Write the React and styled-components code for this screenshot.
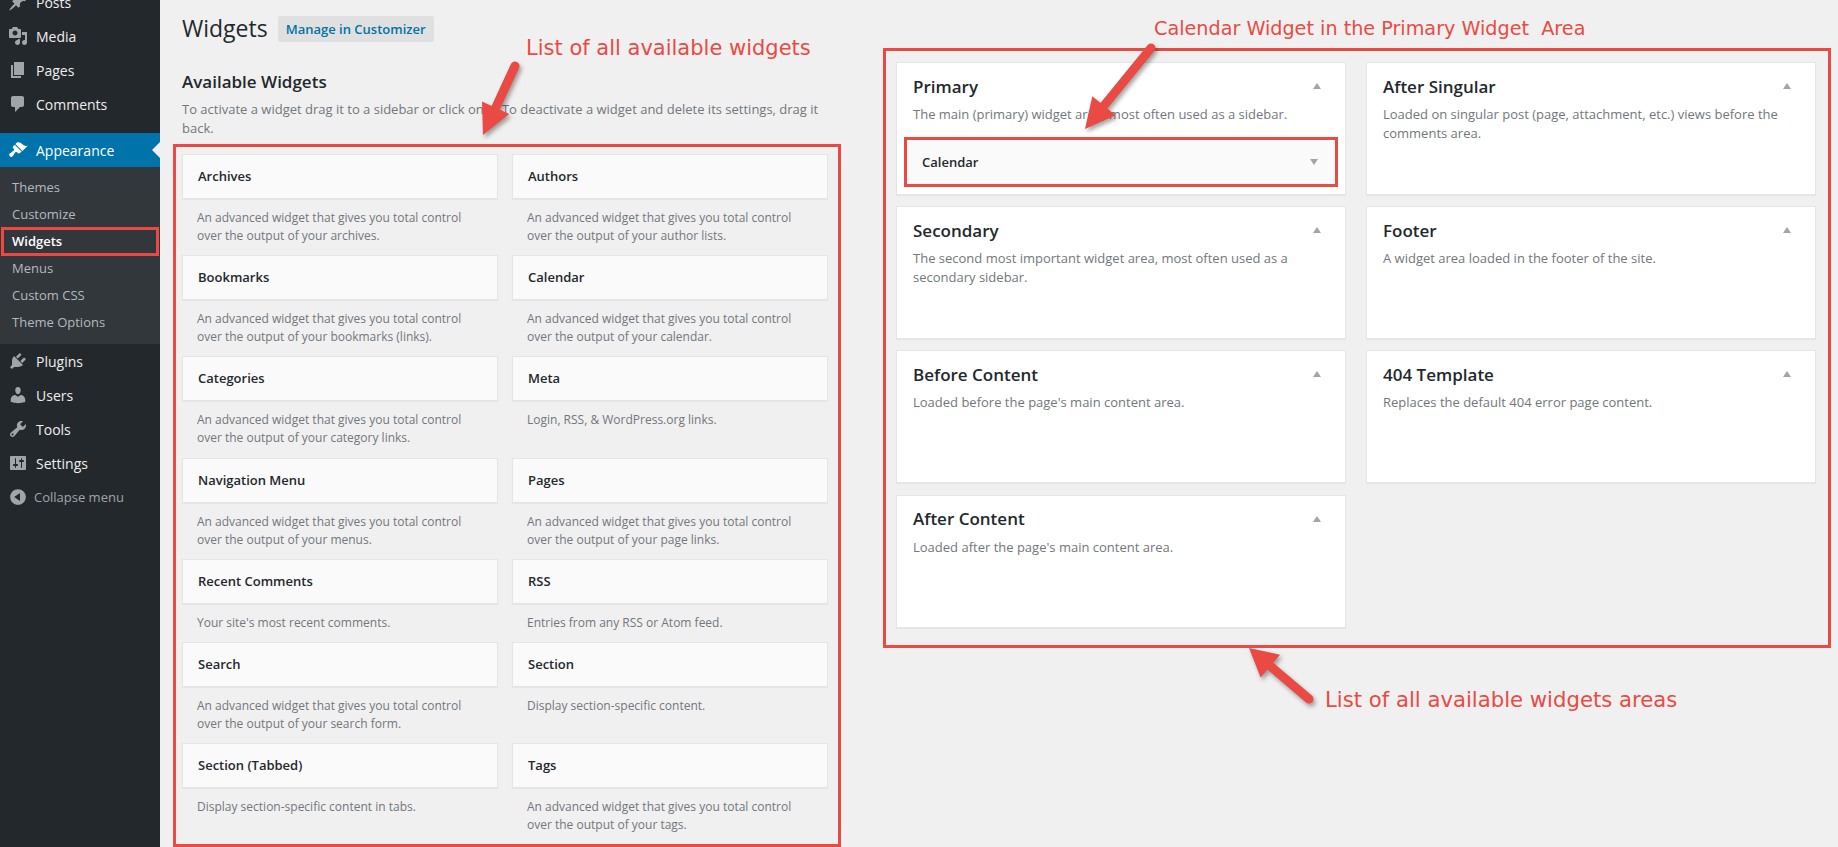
import styled, { createGlobalStyle } from 'styled-components';

const RED = '#ea4a44';
const FONT = '"Open Sans", sans-serif';

const GlobalStyle = createGlobalStyle`
  html, body {
    margin: 0;
    padding: 0;
    background: #f0f0f0;
  }
  * {
    box-sizing: border-box;
  }
`;

// Page frame
const Page = styled.div`
  position: relative;
  display: flex;
  width: 1838px;
  height: 847px;
  overflow: hidden;
  background: #f0f0f0;
  font-family: ${FONT};
  font-size: 13px;
  color: #444;
`;

// Admin menu
const Sidebar = styled.nav`
  flex: 0 0 160px;
  background: #23282d;
  padding-top: 0;
`;

const MenuList = styled.div`
  margin-top: -15px;
`;

const MenuItem = styled.div`
  position: relative;
  display: flex;
  align-items: center;
  height: 34px;
  padding-left: 8px;
  gap: 8px;
  font-size: 14px;
  color: ${({ $active }) => ($active ? '#fff' : '#eee')};
  background: ${({ $active }) => ($active ? '#0073aa' : 'transparent')};
  margin-top: ${({ $gap }) => ($gap ? '12px' : '0')};

  svg {
    flex: 0 0 20px;
    width: 20px;
    height: 20px;
    fill: ${({ $active }) => ($active ? '#fff' : '#a0a5aa')};
  }

  ${({ $active }) =>
    $active &&
    `&:after {
      content: '';
      position: absolute;
      right: 0;
      top: 9px;
      border: 8px solid transparent;
      border-right-color: #f0f0f0;
      border-left-width: 0;
    }`}
`;

const SubMenu = styled.div`
  background: #32373c;
  padding: 7px 0 8px;
`;

const SubItem = styled.div`
  position: relative;
  height: 27px;
  line-height: 27px;
  padding-left: 12px;
  font-size: 13px;
  font-weight: ${({ $current }) => ($current ? 600 : 400)};
  color: ${({ $current }) => ($current ? '#fff' : '#b4b9be')};

  ${({ $current }) =>
    $current &&
    `&:after {
      content: '';
      position: absolute;
      left: 1px;
      right: 1px;
      top: -1px;
      bottom: -1px;
      border: 3px solid ${RED};
    }`}
`;

const Collapse = styled(MenuItem)`
  font-size: 13px;
  color: #a0a5aa;
  gap: 6px;
`;

// Main content
const Main = styled.main`
  flex: 1;
  display: flex;
  align-items: flex-start;
  padding-left: 13px;
  gap: 42px;
`;

const LeftColumn = styled.div`
  flex: 0 0 667px;
  display: flex;
  flex-direction: column;
  height: 847px;
`;

const PageHead = styled.div`
  display: flex;
  align-items: center;
  gap: 10px;
  padding: 14px 0 0 9px;
`;

const PageTitle = styled.h1`
  margin: 0;
  font-size: 23px;
  line-height: 29px;
  font-weight: 400;
  color: #23282d;
`;

const HeadButton = styled.a`
  display: block;
  height: 26px;
  padding: 0 8px;
  line-height: 26px;
  background: #e0e0e0;
  border-radius: 2px;
  font-size: 13px;
  font-weight: 600;
  color: #0073aa;
`;

const SectionTitle = styled.h2`
  margin: 28px 0 0 9px;
  font-size: 17px;
  line-height: 22px;
  font-weight: 600;
  color: #23282d;
`;

const Hint = styled.p`
  margin: 7px 12px 0 9px;
  font-size: 13px;
  line-height: 19px;
  color: #72777c;
`;

const WidgetBox = styled.div`
  flex: 1;
  margin-top: 6px;
  padding: 7px 10px 0 6px;
  border: 3px solid ${RED};
  display: grid;
  grid-template-columns: 316px 316px;
  column-gap: 14px;
  align-content: start;
`;

const WidgetCell = styled.div``;

const WidgetBar = styled.div`
  height: 45px;
  line-height: 42px;
  padding: 0 15px;
  background: #fafafa;
  border: 1px solid #e5e5e5;
  box-shadow: 0 1px 1px rgba(0, 0, 0, 0.04);
  font-size: 13px;
  font-weight: 600;
  color: #23282d;
`;

const WidgetText = styled.p`
  margin: 0;
  padding: 10px 15px 10.2px 15px;
  font-size: 12px;
  line-height: 18px;
  color: #72777c;
`;

// Widget areas
const AreaBox = styled.div`
  flex: 0 0 948px;
  margin-top: 48px;
  height: 600px;
  padding: 11px 10px 0 10px;
  border: 3px solid ${RED};
  display: flex;
  gap: 20px;
`;

const AreaColumn = styled.div`
  flex: 0 0 450px;
  display: flex;
  flex-direction: column;
  gap: 11.2px;
`;

const AreaCard = styled.section`
  height: 133px;
  padding: 12px 16px 0 16px;
  background: #fff;
  border: 1px solid #e5e5e5;
  box-shadow: 0 1px 1px rgba(0, 0, 0, 0.04);
`;

const AreaHead = styled.div`
  display: flex;
  justify-content: space-between;
  align-items: center;
  padding-right: 8px;
  height: 22px;
`;

const AreaTitle = styled.h3`
  margin: 0;
  font-size: 17px;
  font-weight: 600;
  color: #23282d;
`;

const Caret = styled.span`
  width: 0;
  height: 0;
  border-left: 4px solid transparent;
  border-right: 4px solid transparent;
  border-bottom: ${({ $down }) => ($down ? '0' : '6px solid #a0a5aa')};
  border-top: ${({ $down }) => ($down ? '6px solid #a0a5aa' : '0')};
`;

const AreaText = styled.p`
  margin: 8px 0 0;
  font-size: 13px;
  line-height: 19px;
  color: #72777c;
`;

const PlacedWidget = styled.div`
  display: flex;
  justify-content: space-between;
  align-items: center;
  margin: 13px -9px 0;
  height: 50px;
  padding: 0 17px 0 15px;
  background: #fafafa;
  border: 3px solid ${RED};
  font-size: 13px;
  font-weight: 600;
  color: #23282d;
`;

// Annotations over the screenshot
const Note = styled.span`
  position: absolute;
  left: ${({ $x }) => $x}px;
  top: ${({ $y }) => $y}px;
  font-family: "DejaVu Sans", sans-serif;
  font-size: ${({ $size }) => $size}px;
  line-height: 1;
  white-space: pre;
  color: ${RED};
`;

const ArrowLayer = styled.svg`
  position: absolute;
  left: 0;
  top: 0;
  width: 1838px;
  height: 847px;
  pointer-events: none;
  filter: drop-shadow(2px 3px 2px rgba(0, 0, 0, 0.35));
`;

function Arrow({ from, to, head = 30, wing = 15 }) {
  const dx = to[0] - from[0];
  const dy = to[1] - from[1];
  const len = Math.hypot(dx, dy);
  const ux = dx / len;
  const uy = dy / len;
  const bx = to[0] - ux * head;
  const by = to[1] - uy * head;
  const pts = [
    to,
    [bx - uy * wing, by + ux * wing],
    [bx + uy * wing, by - ux * wing],
  ]
    .map((p) => p.join(','))
    .join(' ');
  return (
    <g>
      <line
        x1={from[0]}
        y1={from[1]}
        x2={bx}
        y2={by}
        stroke={RED}
        strokeWidth="9"
        strokeLinecap="round"
      />
      <polygon points={pts} fill={RED} />
    </g>
  );
}

const ICONS = {
  posts:
    'M10.44 3.02l1.82-1.82 6.36 6.35-1.83 1.82c-1.05-.68-2.48-.57-3.41.36l-.75.75c-.92.93-1.04 2.35-.35 3.41l-1.83 1.82-2.41-2.41-2.8 2.79c-.42.42-3.38 2.71-3.8 2.29s1.86-3.39 2.28-3.81l2.79-2.79L4.1 9.36l1.83-1.82c1.05.69 2.48.57 3.4-.36l.75-.75c.93-.92 1.05-2.35.36-3.41z',
  media:
    'M13 11V4c0-.55-.45-1-1-1h-1.67L9 1H5L3.67 3H2c-.55 0-1 .45-1 1v7c0 .55.45 1 1 1h10c.55 0 1-.45 1-1zM7 4.5c1.38 0 2.5 1.12 2.5 2.5S8.38 9.5 7 9.5 4.5 8.38 4.5 7 5.62 4.5 7 4.5zM14 6h5v10.5c0 1.38-1.12 2.5-2.5 2.5S14 17.88 14 16.5s1.12-2.5 2.5-2.5c.17 0 .34.02.5.05V9h-3V6zm-4 8.05V13h2v3.5c0 1.38-1.12 2.5-2.5 2.5S7 17.88 7 16.5 8.12 14 9.5 14c.17 0 .34.02.5.05z',
  pages: 'M6 15V2h10v13H6zm-1 1h8v2H3V5h2v11z',
  comments:
    'M5 2h9c1.1 0 2 .9 2 2v7c0 1.1-.9 2-2 2h-2l-5 5v-5H5c-1.1 0-2-.9-2-2V4c0-1.1.9-2 2-2z',
  appearance:
    'M14.48 11.06L7.41 3.99l1.5-1.5c.5-.56 2.3-.47 3.51.32 1.21.8 1.43 1.28 2.91 2.1 1.18.64 2.45 1.26 4.45.85zm-.71.71L6.7 4.7 4.93 6.47c-.39.39-.39 1.02 0 1.41l1.06 1.06c.39.39.39 1.03 0 1.42-.6.6-1.43 1.11-2.21 1.69-.35.26-.7.53-1.01.84C1.43 13.26 1 14.09 1.25 15c.27.99.9 1.95 1.75 2s1.65-.6 2.21-1.49c.23-.37.44-.74.68-1.11.48-.82.99-1.56 1.59-2.16.39-.39 1.03-.39 1.42 0l1.06 1.06c.39.39 1.02.39 1.41 0z',
  plugins:
    'M13.11 4.36L9.87 7.6 8 5.73l3.24-3.24c.35-.34 1.05-.2 1.56.32.52.51.66 1.21.31 1.55zm-8 1.77l.91-1.12 9.01 9.01-1.19.84c-.71.71-2.63 1.16-3.82 1.16H6.14L4.9 17.26c-.59.59-1.54.59-2.12 0-.59-.58-.59-1.53 0-2.12l1.24-1.24v-3.88c0-1.13.4-3.19 1.09-3.89zm7.26 3.97l3.24-3.24c.34-.35 1.04-.21 1.55.31.52.51.66 1.21.31 1.55l-3.24 3.25z',
  users:
    'M10 9.25c-2.27 0-2.73-3.44-2.73-3.44C7 4.02 7.82 2 9.97 2c2.16 0 2.98 2.02 2.71 3.81 0 0-.41 3.44-2.68 3.44zm0 2.57L12.72 10c2.39 0 4.52 2.33 4.52 4.53v2.49s-3.65 1.13-7.24 1.13c-3.65 0-7.24-1.13-7.24-1.13v-2.49c0-2.25 1.94-4.48 4.47-4.48z',
  tools:
    'M16.68 9.77c-1.34 1.34-3.3 1.67-4.95.99l-5.41 6.52c-.99.99-2.59.99-3.58 0s-.99-2.59 0-3.57l6.52-5.42c-.68-1.65-.35-3.61.99-4.95 1.28-1.28 3.12-1.62 4.72-1.06l-2.89 2.89 2.82 2.82 2.86-2.87c.53 1.58.18 3.39-1.08 4.65zM3.81 16.21c.4.39 1.04.39 1.43 0 .4-.4.4-1.04 0-1.43-.39-.4-1.03-.4-1.43 0-.39.39-.39 1.03 0 1.43z',
  settings:
    'M18 16V4c0-.55-.45-1-1-1H3c-.55 0-1 .45-1 1v12c0 .55.45 1 1 1h14c.55 0 1-.45 1-1zM8 11h1c.55 0 1 .45 1 1s-.45 1-1 1H8v1.5c0 .28-.22.5-.5.5s-.5-.22-.5-.5V13H6c-.55 0-1-.45-1-1s.45-1 1-1h1V5.5c0-.28.22-.5.5-.5s.5.22.5.5V11zm5-2h-1c-.55 0-1-.45-1-1s.45-1 1-1h1V5.5c0-.28.22-.5.5-.5s.5.22.5.5V7h1c.55 0 1 .45 1 1s-.45 1-1 1h-1v5.5c0 .28-.22.5-.5.5s-.5-.22-.5-.5V9z',
  collapse:
    'M10 2.16c4.33 0 7.84 3.51 7.84 7.84s-3.51 7.84-7.84 7.84S2.16 14.33 2.16 10 5.71 2.16 10 2.16zm2 11.72V6.12L6.18 9.97z',
};

const Icon = ({ name }) => (
  <svg viewBox="0 0 20 20" aria-hidden="true">
    <path d={ICONS[name]} />
  </svg>
);

const advanced = (what) =>
  `An advanced widget that gives you total control over the output of your ${what}.`;

const WIDGETS = [
  ['Archives', advanced('archives')],
  ['Authors', advanced('author lists')],
  ['Bookmarks', advanced('bookmarks (links)')],
  ['Calendar', advanced('calendar')],
  ['Categories', advanced('category links')],
  ['Meta', 'Login, RSS, & WordPress.org links.'],
  ['Navigation Menu', advanced('menus')],
  ['Pages', advanced('page links')],
  ['Recent Comments', "Your site's most recent comments."],
  ['RSS', 'Entries from any RSS or Atom feed.'],
  ['Search', advanced('search form')],
  ['Section', 'Display section-specific content.'],
  ['Section (Tabbed)', 'Display section-specific content in tabs.'],
  ['Tags', advanced('tags')],
];

const AREAS_LEFT = [
  ['Primary', 'The main (primary) widget area, most often used as a sidebar.', true],
  ['Secondary', 'The second most important widget area, most often used as a secondary sidebar.'],
  ['Before Content', "Loaded before the page's main content area."],
  ['After Content', "Loaded after the page's main content area."],
];

const AREAS_RIGHT = [
  ['After Singular', 'Loaded on singular post (page, attachment, etc.) views before the comments area.'],
  ['Footer', 'A widget area loaded in the footer of the site.'],
  ['404 Template', 'Replaces the default 404 error page content.'],
];

function Area({ title, text, withCalendar }) {
  return (
    <AreaCard>
      <AreaHead>
        <AreaTitle>{title}</AreaTitle>
        <Caret />
      </AreaHead>
      <AreaText>{text}</AreaText>
      {withCalendar && (
        <PlacedWidget>
          Calendar
          <Caret $down />
        </PlacedWidget>
      )}
    </AreaCard>
  );
}

export default function App() {
  return (
    <Page>
      <GlobalStyle />
      <Sidebar>
        <MenuList>
          <MenuItem><Icon name="posts" />Posts</MenuItem>
          <MenuItem><Icon name="media" />Media</MenuItem>
          <MenuItem><Icon name="pages" />Pages</MenuItem>
          <MenuItem><Icon name="comments" />Comments</MenuItem>
          <MenuItem $gap $active><Icon name="appearance" />Appearance</MenuItem>
          <SubMenu>
            <SubItem>Themes</SubItem>
            <SubItem>Customize</SubItem>
            <SubItem $current>Widgets</SubItem>
            <SubItem>Menus</SubItem>
            <SubItem>Custom CSS</SubItem>
            <SubItem>Theme Options</SubItem>
          </SubMenu>
          <MenuItem><Icon name="plugins" />Plugins</MenuItem>
          <MenuItem><Icon name="users" />Users</MenuItem>
          <MenuItem><Icon name="tools" />Tools</MenuItem>
          <MenuItem><Icon name="settings" />Settings</MenuItem>
          <Collapse><Icon name="collapse" />Collapse menu</Collapse>
        </MenuList>
      </Sidebar>

      <Main>
        <LeftColumn>
          <PageHead>
            <PageTitle>Widgets</PageTitle>
            <HeadButton>Manage in Customizer</HeadButton>
          </PageHead>
          <SectionTitle>Available Widgets</SectionTitle>
          <Hint>
            To activate a widget drag it to a sidebar or click on it. To deactivate a widget and
            delete its settings, drag it back.
          </Hint>
          <WidgetBox>
            {WIDGETS.map(([name, text]) => (
              <WidgetCell key={name}>
                <WidgetBar>{name}</WidgetBar>
                <WidgetText>{text}</WidgetText>
              </WidgetCell>
            ))}
          </WidgetBox>
        </LeftColumn>

        <AreaBox>
          <AreaColumn>
            {AREAS_LEFT.map(([title, text, cal]) => (
              <Area key={title} title={title} text={text} withCalendar={cal} />
            ))}
          </AreaColumn>
          <AreaColumn>
            {AREAS_RIGHT.map(([title, text]) => (
              <Area key={title} title={title} text={text} />
            ))}
          </AreaColumn>
        </AreaBox>
      </Main>

      <ArrowLayer viewBox="0 0 1838 847">
        <Arrow from={[515, 66]} to={[483, 135]} />
        <Arrow from={[1151, 48]} to={[1085, 129]} />
        <Arrow from={[1309, 699]} to={[1249, 648]} head={28} wing={15} />
      </ArrowLayer>
      <Note $x={526} $y={38} $size={21}>List of all available widgets</Note>
      <Note $x={1154} $y={19} $size={19.2}>Calendar Widget in the Primary Widget  Area</Note>
      <Note $x={1325} $y={689} $size={21.2}>List of all available widgets areas</Note>
    </Page>
  );
}
